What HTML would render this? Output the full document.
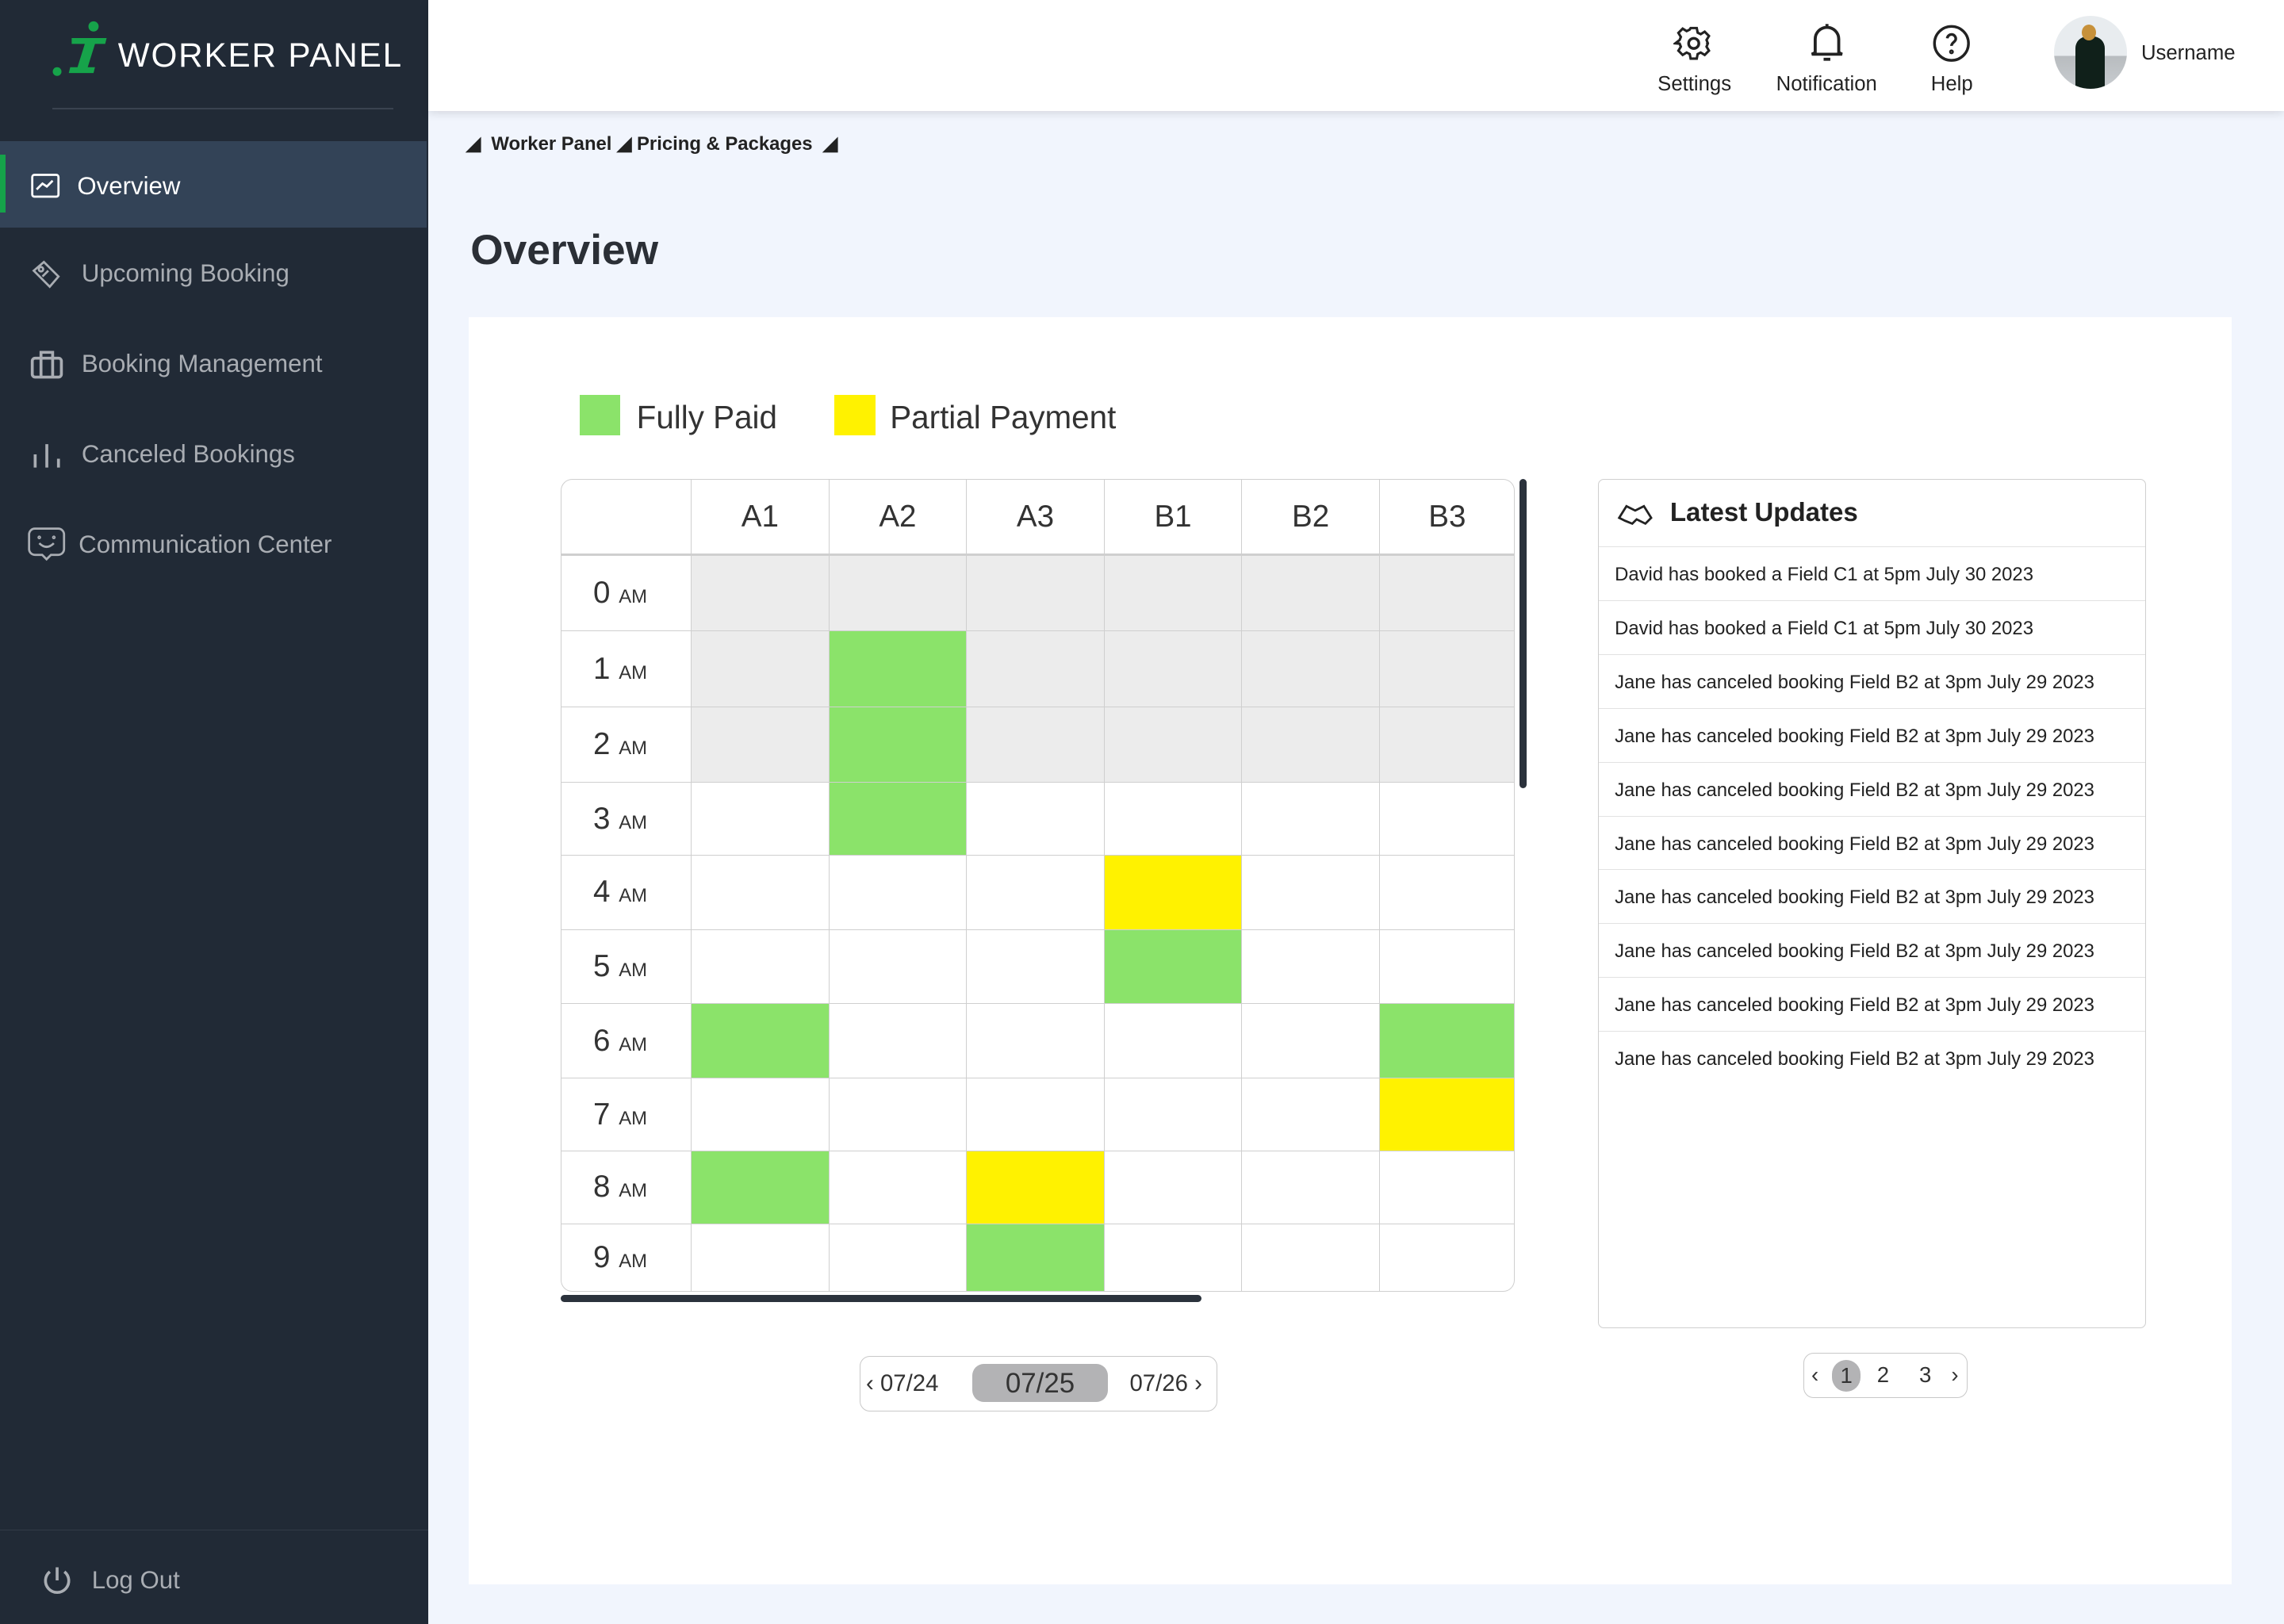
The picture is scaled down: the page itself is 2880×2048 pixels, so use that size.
<!DOCTYPE html>
<html><head><meta charset="utf-8"><style>
html{zoom:1.83673}
*{margin:0;padding:0;box-sizing:border-box}
body{width:1568px;height:1115px;overflow:hidden;background:#f1f5fd;font-family:"Liberation Sans",sans-serif;position:relative;color:#2b2f36}
.a{position:absolute}
#side{left:0;top:0;width:294px;height:1115px;background:#212a36}
.nav{position:absolute;left:0;width:294px;height:60px;color:#a9adb3;font-size:17px;display:flex;align-items:center}
.nav svg{position:absolute;left:20px}
.nav span{position:absolute;left:56px}
#hdr{left:294px;top:0;width:1274px;height:76px;background:#fff;box-shadow:0 2px 6px rgba(0,0,0,.12)}
.hi{position:absolute;top:16px;text-align:center;font-size:14px;color:#222}
.hi svg{display:block;margin:0 auto 6px}
table{border-collapse:separate;border-spacing:0}
#tbl{left:385px;top:329px;border:1px solid #cfcfcf;border-radius:8px;overflow:hidden;background:#fff}
#tbl td{border-right:1px solid #cfcfcf;border-bottom:1px solid #cfcfcf;padding:0}
#tbl tr td:last-child{border-right:none}
#tbl tr:last-child td{border-bottom:none}
#tbl th{border-right:1px solid #cfcfcf;border-bottom:2px solid #cfcfcf;font-weight:400;font-size:21px;color:#333;height:52px}
#tbl th:last-child{border-right:none}
.t{font-size:21px;color:#333;text-align:center;padding-right:8px!important}
.t small{font-size:13px}
.g{background:#ececec}.G{background:#8be36a}.Y{background:#fff200}
#upd{left:1097px;top:329px;width:376px;height:583px;border:1px solid #cfcfcf;border-radius:4px;background:#fff}
.ur{height:37px;border-bottom:1px solid #e2e2e2;font-size:13px;padding-left:11px;line-height:38px;color:#222}
</style></head><body>
<div id="side" class="a">
 <svg class="a" style="left:33px;top:14px" width="42" height="40" viewBox="0 0 42 40"><circle cx="6" cy="35" r="3" fill="#16a34a"/><circle cx="31" cy="4" r="3.5" fill="#16a34a"/><path d="M16 12h24l-1 4h-7l-5 16h5l-1 4H14l1-4h5l5-16h-9z" fill="#16a34a"/></svg>
 <div class="a" style="left:81px;top:25px;color:#fff;font-size:23px;letter-spacing:1px">WORKER PANEL</div>
 <div class="a" style="left:36px;top:74px;width:234px;height:1px;background:#3a4350"></div>
 <div class="a" style="left:0;top:97px;width:293px;height:59px;background:#334357"></div>
 <div class="a" style="left:0;top:106px;width:4px;height:40px;background:#16a34a"></div>
 <div class="nav" style="top:98px;color:#fff"><svg width="22" height="22" viewBox="0 0 22 22" fill="none" stroke="#fff" stroke-width="1.5"><rect x="2" y="3" width="18" height="15" rx="1.5"/><path d="M5 13l4-4 3 2 4-4"/></svg><span style="left:53px">Overview</span></div>
 <div class="nav" style="top:158px"><svg width="24" height="24" viewBox="0 0 24 24" fill="none" stroke="#a9adb3" stroke-width="1.5"><path d="M3 10l7-6 10 10-6 7z"/><circle cx="8" cy="9" r="1.5"/><path d="M9 14l4-4"/></svg><span>Upcoming Booking</span></div>
 <div class="nav" style="top:220px"><svg width="24" height="24" viewBox="0 0 24 24" fill="none" stroke="#a9adb3" stroke-width="2"><rect x="2" y="8" width="20" height="13" rx="2"/><path d="M8 8V4h8v4M8 8v13M16 8v13"/></svg><span>Booking Management</span></div>
 <div class="nav" style="top:282px"><svg width="24" height="24" viewBox="0 0 24 24" fill="none" stroke="#a9adb3" stroke-width="2"><path d="M4 12v9M12 5v16M20 15v6"/></svg><span>Canceled Bookings</span></div>
 <div class="nav" style="top:344px"><svg width="28" height="26" viewBox="0 0 28 26" fill="none" stroke="#a9adb3" stroke-width="1.5" style="left:18px"><path d="M6 2h16a4 4 0 014 4v10a4 4 0 01-4 4h-5l-3 3-3-3H6a4 4 0 01-4-4V6a4 4 0 014-4z"/><path d="M9 12q5 5 10 0"/><circle cx="9" cy="8" r=".5"/><circle cx="19" cy="8" r=".5"/></svg><span style="left:54px">Communication Center</span></div>
 <div class="a" style="left:0;top:1050px;width:294px;height:1px;background:#313a47"></div>
 <div class="nav" style="top:1055px"><svg width="24" height="24" viewBox="0 0 24 24" fill="none" stroke="#a9adb3" stroke-width="2" style="left:27px"><path d="M7 6a8 8 0 1010 0M12 3v9"/></svg><span style="left:63px">Log Out</span></div>
</div>
<div id="hdr" class="a">
 <div class="hi" style="left:844px;width:50px"><svg width="28" height="28" viewBox="0 0 24 24" fill="none" stroke="#222" stroke-width="1.6"><path d="M10 2h4l.6 3 2 1 2.6-1.6 2.8 2.8L20.4 9.8l.8 2-.2.2 .2.2-.8 2 1.6 2.6-2.8 2.8-2.6-1.6-2 1L14 22h-4l-.6-3-2-1-2.6 1.6-2.8-2.8 1.6-2.6-.8-2L0 12l2.8-2.2.8-2L2 5.2 4.8 2.4 7.4 4l2-1z" transform="scale(.9) translate(1.3 1.3)"/><circle cx="12" cy="12" r="3"/></svg>Settings</div>
 <div class="hi" style="left:920px;width:80px;top:14px"><svg width="28" height="30" viewBox="0 0 24 26" fill="none" stroke="#222" stroke-width="1.8"><path d="M12 2v2M5 19V11a7 7 0 0114 0v8l2 1H3z"/><path d="M10 23h4"/></svg>Notification</div>
 <div class="hi" style="left:1026px;width:40px"><svg width="28" height="28" viewBox="0 0 24 24" fill="none" stroke="#222" stroke-width="1.6"><circle cx="12" cy="12" r="10"/><path d="M9.5 9a2.5 2.5 0 115 .5c0 1.5-2.5 2-2.5 4"/><circle cx="12" cy="17" r=".6"/></svg>Help</div>
 <div class="a" style="left:1116px;top:11px;width:50px;height:50px;border-radius:50%;background:linear-gradient(#e8ecef 55%,#b8bcbf 55%,#c8ccd0);overflow:hidden"><div class="a" style="left:15px;top:14px;width:20px;height:40px;background:#10201a;border-radius:8px 8px 0 0"></div><div class="a" style="left:19px;top:6px;width:10px;height:11px;background:#c7913a;border-radius:50%"></div></div>
 <div class="a" style="left:1176px;top:29px;font-size:14px;color:#222">Username</div>
</div>
<div class="a" style="left:320px;top:91px;font-size:13px;font-weight:700;color:#222">◢ &nbsp;Worker Panel ◢ Pricing &amp; Packages &nbsp;◢</div>
<div class="a" style="left:323px;top:155px;font-size:29px;font-weight:700;color:#2b2f36">Overview</div>
<div class="a" style="left:322px;top:218px;width:1210px;height:870px;background:#fff"></div>
<div class="a" style="left:398px;top:271px;width:28px;height:28px;background:#8be36a"></div>
<div class="a" style="left:437px;top:274px;font-size:22px;color:#333">Fully Paid</div>
<div class="a" style="left:573px;top:271px;width:28px;height:28px;background:#fff200"></div>
<div class="a" style="left:611px;top:274px;font-size:22px;color:#333">Partial Payment</div>
<table id="tbl" class="a">
<tr><th style="width:89px"></th><th style="width:95px">A1</th><th style="width:94px">A2</th><th style="width:95px">A3</th><th style="width:94px">B1</th><th style="width:95px">B2</th><th style="width:92px">B3</th></tr>
<tr style="height:52px"><td class="t">0 <small>AM</small></td><td class="g"></td><td class="g"></td><td class="g"></td><td class="g"></td><td class="g"></td><td class="g"></td></tr>
<tr style="height:52px"><td class="t">1 <small>AM</small></td><td class="g"></td><td class="G"></td><td class="g"></td><td class="g"></td><td class="g"></td><td class="g"></td></tr>
<tr style="height:52px"><td class="t">2 <small>AM</small></td><td class="g"></td><td class="G"></td><td class="g"></td><td class="g"></td><td class="g"></td><td class="g"></td></tr>
<tr style="height:50px"><td class="t">3 <small>AM</small></td><td></td><td class="G"></td><td></td><td></td><td></td><td></td></tr>
<tr style="height:51px"><td class="t">4 <small>AM</small></td><td></td><td></td><td></td><td class="Y"></td><td></td><td></td></tr>
<tr style="height:51px"><td class="t">5 <small>AM</small></td><td></td><td></td><td></td><td class="G"></td><td></td><td></td></tr>
<tr style="height:51px"><td class="t">6 <small>AM</small></td><td class="G"></td><td></td><td></td><td></td><td></td><td class="G"></td></tr>
<tr style="height:50px"><td class="t">7 <small>AM</small></td><td></td><td></td><td></td><td></td><td></td><td class="Y"></td></tr>
<tr style="height:50px"><td class="t">8 <small>AM</small></td><td class="G"></td><td></td><td class="Y"></td><td></td><td></td><td></td></tr>
<tr style="height:46px"><td class="t">9 <small>AM</small></td><td></td><td></td><td class="G"></td><td></td><td></td><td></td></tr>
</table>
<div class="a" style="left:1043px;top:329px;width:5px;height:212px;background:#2b323c;border-radius:3px"></div>
<div class="a" style="left:385px;top:889px;width:440px;height:5px;background:#2b323c;border-radius:3px"></div>
<div class="a" style="left:590px;top:931px;width:246px;height:38px;border:1px solid #c8c8c8;border-radius:7px;font-size:16px;color:#333">
 <span class="a" style="left:4px;top:9px">‹ 07/24</span>
 <span class="a" style="left:77px;top:5px;width:93px;height:26px;background:#b3b3b5;border-radius:8px;text-align:center;font-size:19px;line-height:27px">07/25</span>
 <span class="a" style="left:185px;top:9px">07/26 ›</span>
</div>
<div id="upd" class="a">
 <div style="height:46px;border-bottom:1px solid #e2e2e2;display:flex;align-items:center;padding-left:12px;font-size:18px;font-weight:700;color:#222"><svg width="26" height="18" viewBox="0 0 26 18" fill="none" stroke="#222" stroke-width="1.5" style="margin-right:11px"><path d="M2 12l5-8 6 3 6-3 5 8-4 4-6-3-3 3-5-2z"/></svg>Latest Updates</div>
 <div class="ur">David has booked a Field C1 at 5pm July 30 2023</div>
 <div class="ur">David has booked a Field C1 at 5pm July 30 2023</div>
 <div class="ur">Jane has canceled booking Field B2 at 3pm July 29 2023</div>
 <div class="ur">Jane has canceled booking Field B2 at 3pm July 29 2023</div>
 <div class="ur">Jane has canceled booking Field B2 at 3pm July 29 2023</div>
 <div class="ur">Jane has canceled booking Field B2 at 3pm July 29 2023</div>
 <div class="ur">Jane has canceled booking Field B2 at 3pm July 29 2023</div>
 <div class="ur">Jane has canceled booking Field B2 at 3pm July 29 2023</div>
 <div class="ur">Jane has canceled booking Field B2 at 3pm July 29 2023</div>
 <div class="ur" style="border:none">Jane has canceled booking Field B2 at 3pm July 29 2023</div>
</div>
<div class="a" style="left:1238px;top:929px;width:113px;height:31px;border:1px solid #c8c8c8;border-radius:7px;font-size:15px;color:#333">
 <span class="a" style="left:5px;top:6px">‹</span>
 <span class="a" style="left:19px;top:4px;width:20px;height:22px;background:#b3b3b5;border-radius:10px;text-align:center;line-height:22px">1</span>
 <span class="a" style="left:50px;top:6px">2</span>
 <span class="a" style="left:79px;top:6px">3</span>
 <span class="a" style="left:101px;top:6px">›</span>
</div>
</body></html>
